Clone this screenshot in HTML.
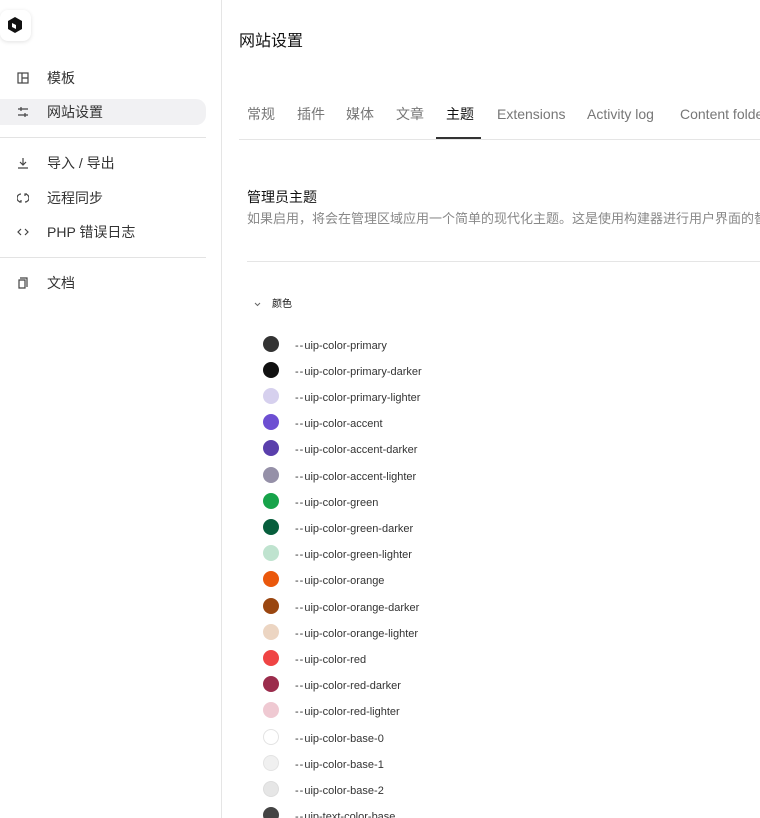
<!DOCTYPE html>
<html><head><meta charset="utf-8"><style>
*{margin:0;padding:0;box-sizing:border-box}
html,body{width:760px;height:818px;overflow:hidden}
body{background:#fff;font-family:"Liberation Sans","Noto Sans CJK SC",sans-serif;color:#222;position:relative}
.side{position:absolute;left:0;top:0;width:222px;height:818px;border-right:1px solid #e5e5e5}
.logo{position:absolute;left:0;top:10px;width:31px;height:31px;background:#fff;border-radius:8px;box-shadow:0 1px 4px rgba(0,0,0,.12)}
.nav{position:absolute;left:0;width:206px;height:26px;font-size:14px;color:#333}
.nav svg{position:absolute;left:17px;top:7px}
.nav .t{position:absolute;left:47px;top:4px;line-height:18px}
.act{background:#f1f1f3;border-radius:0 10px 10px 0}
.hr{position:absolute;left:0;width:206px;height:1px;background:#e3e3e3}
.title{position:absolute;left:239px;top:32px;font-size:16px;color:#111;line-height:20px}
.tabs{position:absolute;left:239px;top:104px;width:521px;height:20px;font-size:14px;color:#777;white-space:nowrap;overflow:hidden}
.tabs span{position:absolute;top:0;line-height:20px}
.tabline{position:absolute;left:239px;top:139px;width:521px;height:1px;background:#e5e5e5}
.ul{position:absolute;left:436px;top:137px;width:45px;height:2px;background:#333}
.h{position:absolute;left:247px;top:187px;font-size:14px;color:#111;line-height:20px}
.d{position:absolute;left:247px;top:210px;width:513px;overflow:hidden;font-size:13px;color:#888;white-space:nowrap;line-height:18px}
.sep{position:absolute;left:247px;top:261px;width:513px;height:1px;background:#e5e5e5}
.row{position:absolute;left:263px;font-size:11px;color:#333;height:16px;width:497px}
.row i{position:absolute;left:0;top:0;width:16px;height:16px;border-radius:50%}
.row span{position:absolute;left:32px;top:3px;line-height:14px;white-space:nowrap}
.row b{font-weight:normal;letter-spacing:1px}
</style></head><body>
<div class="side">
<div class="logo"><svg width="31" height="31" viewBox="0 0 31 31"><path d="M8 11l7-4 7 4v8l-7 4-7-4z" fill="#111"/><path d="M12 13l4 2v4l-4-2z" fill="#fff"/></svg></div>
<div class="nav" style="top:65px"><svg width="12" height="12" viewBox="0 0 12 12" fill="none" stroke="#444" stroke-width="1.2"><rect x="1" y="1" width="10" height="10"/><path d="M5 1v10M5 6h6"/></svg><span class="t">模板</span></div>
<div class="nav act" style="top:99px"><svg width="12" height="12" viewBox="0 0 12 12" fill="none" stroke="#444" stroke-width="1.2"><path d="M1 3h10M1 9h10M4 1v4M8 7v4"/></svg><span class="t">网站设置</span></div>
<div class="hr" style="top:137px"></div>
<div class="nav" style="top:150px"><svg width="12" height="12" viewBox="0 0 12 12" fill="none" stroke="#444" stroke-width="1.2"><path d="M6 1v7M3 5l3 3 3-3M1 11h10"/></svg><span class="t">导入 / 导出</span></div>
<div class="nav" style="top:185px"><svg width="12" height="12" viewBox="0 0 12 12" fill="none" stroke="#444" stroke-width="1.2"><path d="M4 2a4 4 0 0 0 0 8M2 10h2v-2M8 10a4 4 0 0 0 0-8M10 2H8v2"/></svg><span class="t">远程同步</span></div>
<div class="nav" style="top:219px"><svg width="12" height="12" viewBox="0 0 12 12" fill="none" stroke="#444" stroke-width="1.2"><path d="M4 3L1 6l3 3M8 3l3 3-3 3"/></svg><span class="t">PHP 错误日志</span></div>
<div class="hr" style="top:257px"></div>
<div class="nav" style="top:270px"><svg width="12" height="12" viewBox="0 0 12 12" fill="none" stroke="#444" stroke-width="1.2"><path d="M3 1h7v9M2 3h6v8H2z"/></svg><span class="t">文档</span></div>
</div>
<div class="title">网站设置</div>
<div class="tabs">
<span style="left:8px">常规</span><span style="left:58px">插件</span><span style="left:107px">媒体</span><span style="left:157px">文章</span><span style="left:207px;color:#111">主题</span><span style="left:258px">Extensions</span><span style="left:348px">Activity log</span><span style="left:441px">Content folders</span>
</div>
<div class="tabline"></div><div class="ul"></div>
<div class="h">管理员主题</div>
<div class="d">如果启用，将会在管理区域应用一个简单的现代化主题。这是使用构建器进行用户界面的替代方案。</div>
<div class="sep"></div>
<svg style="position:absolute;left:254px;top:302px" width="7" height="5" viewBox="0 0 7 5" fill="none" stroke="#666"><path d="M1 1l2.5 2.5L6 1"/></svg>
<div style="position:absolute;left:272px;top:298px;font-size:10px;color:#111;line-height:14px">颜色</div>
<div class="row" style="top:336px"><i style="background:#333"></i><span><b>--</b>uip-color-primary</span></div>
<div class="row" style="top:362px"><i style="background:#111"></i><span><b>--</b>uip-color-primary-darker</span></div>
<div class="row" style="top:388px"><i style="background:#d6d0ee"></i><span><b>--</b>uip-color-primary-lighter</span></div>
<div class="row" style="top:414px"><i style="background:#6d4fd2"></i><span><b>--</b>uip-color-accent</span></div>
<div class="row" style="top:440px"><i style="background:#5a3fac"></i><span><b>--</b>uip-color-accent-darker</span></div>
<div class="row" style="top:467px"><i style="background:#9590a8"></i><span><b>--</b>uip-color-accent-lighter</span></div>
<div class="row" style="top:493px"><i style="background:#17a34a"></i><span><b>--</b>uip-color-green</span></div>
<div class="row" style="top:519px"><i style="background:#075e3c"></i><span><b>--</b>uip-color-green-darker</span></div>
<div class="row" style="top:545px"><i style="background:#bfe3cf"></i><span><b>--</b>uip-color-green-lighter</span></div>
<div class="row" style="top:571px"><i style="background:#ea580c"></i><span><b>--</b>uip-color-orange</span></div>
<div class="row" style="top:598px"><i style="background:#9a4610"></i><span><b>--</b>uip-color-orange-darker</span></div>
<div class="row" style="top:624px"><i style="background:#ecd5c2"></i><span><b>--</b>uip-color-orange-lighter</span></div>
<div class="row" style="top:650px"><i style="background:#ef4444"></i><span><b>--</b>uip-color-red</span></div>
<div class="row" style="top:676px"><i style="background:#9b2c4c"></i><span><b>--</b>uip-color-red-darker</span></div>
<div class="row" style="top:702px"><i style="background:#efc9d2"></i><span><b>--</b>uip-color-red-lighter</span></div>
<div class="row" style="top:729px"><i style="background:#fff;border:1px solid #e3e3e3"></i><span><b>--</b>uip-color-base-0</span></div>
<div class="row" style="top:755px"><i style="background:#f0f0f0;border:1px solid #e3e3e3"></i><span><b>--</b>uip-color-base-1</span></div>
<div class="row" style="top:781px"><i style="background:#e6e6e6;border:1px solid #ddd"></i><span><b>--</b>uip-color-base-2</span></div>
<div class="row" style="top:807px"><i style="background:#444"></i><span><b>--</b>uip-text-color-base</span></div>
</body></html>
